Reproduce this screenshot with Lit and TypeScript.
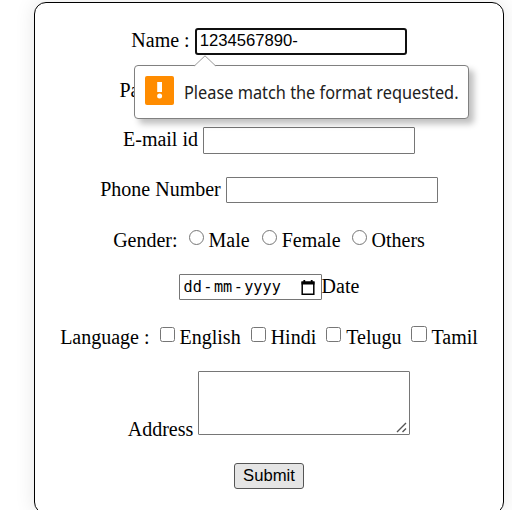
import { LitElement, html, css } from "lit";
import { customElement } from "lit/decorators.js";

@customElement("app-root")
export class AppRoot extends LitElement {
  static styles = css`
    :host { display: block; height: 510px; overflow: hidden; background: #fff; color: #000;
      font: 20px/24px "Liberation Serif", serif; }
    * { box-sizing: border-box; }
    .card { width: 470px; height: 512px; margin: 2px 0 0 34px; padding-top: 13px; border: 1px solid #000;
      border-radius: 12px; box-shadow: 0 0 20px rgba(0, 0, 0, 0.1); display: grid;
      grid-template-rows: 50px 49px 50px 50px 47px 50px 49px 88px 53px; }
    .row { display: flex; align-items: center; justify-content: center; white-space: pre; }
    .row > span { margin-bottom: 2px; }
    .choices > span { margin: 3px 0 0; }
    .languages > span { margin-top: 1px; }
    .password { width: 82px; }
    .field { width: 212px; height: 27px; margin: 0 0 0 5px; padding: 0 3px; border: 1px solid #767676;
      border-radius: 1px; background: #fff; outline: none; color: #000;
      font: 16.67px/20px "Liberation Sans", sans-serif; }
    .focus { border: 2px solid #101010; border-radius: 3px; padding: 0 3px 1px; }
    .phone { height: 26px; }
    .box { width: 15px; height: 15px; border: 1px solid #767676; border-radius: 2.5px; flex: none;
      margin: 0 5px 5px 0; }
    .box.wide { width: 16px; height: 16px; margin-right: 4px; }
    .radio { border-radius: 50%; margin: 0 5px 2px 1px; }
    .date { width: 143px; height: 26px; margin: 0; display: flex; align-items: center;
      font: 15.2px/20px "DejaVu Sans Mono", monospace; padding: 0 6px 0 4px; }
    .dash { width: 12px; text-align: center; }
    .cal { margin-left: auto; }
    .area { width: 212px; height: 64px; margin: 0 0 4px 5px; border: 1px solid #767676; border-radius: 1px;
      display: flex; align-items: flex-end; justify-content: flex-end; }
    .row > .address { align-self: flex-end; margin-bottom: 8px; }
    .submit { width: 70px; height: 26px; padding: 0; border: 1px solid #555; border-radius: 3px;
      background: #e5e5e5; color: #000; font: 16.67px/20px "Liberation Sans", sans-serif; }
    .tip { position: absolute; left: 134px; top: 65px; width: 335px; height: 54px; border: 1px solid #808080;
      border-radius: 4px; background: #fff; box-shadow: 5px 5px 6px rgba(0, 0, 0, 0.25);
      display: flex; align-items: center; padding-left: 10px; white-space: nowrap;
      font: 17.4px/24px "Noto Sans", sans-serif; color: #202020; }
    .arrow { position: absolute; left: 59px; top: -11px; }
    .warn { margin: 0 10px 4px 0; flex: none; }
    .message { transform: scaleX(0.938); transform-origin: left; margin-bottom: 1px; }
    svg { display: block; }
  `;

  private option(kind: string, label: string, gap: number) {
    return html`<i class="box ${kind}"></i><span>${label}</span><i style="width:${gap}px"></i>`;
  }

  render() {
    return html`
      <form class="card">
        <div class="row"><span>Name :</span><input class="field focus" value="1234567890-" /></div>
        <div class="row"><span class="password">Pa</span><input class="field" /></div>
        <div class="row"><span>E-mail id</span><input class="field" /></div>
        <div class="row"><span>Phone Number</span><input class="field phone" /></div>
        <div class="row choices"><span>Gender:  </span>${this.option("radio", "Male", 11)}${this.option("radio", "Female", 10)}${this.option("radio", "Others", 0)}</div>
        <div class="row"><div class="field date"><span>dd</span><span class="dash">-</span><span>mm</span><span class="dash">-</span><span>yyyy</span><svg class="cal" width="14" height="15" viewBox="0 0 14 15">
              <path d="M1.2 2.2h11.6v12H1.2z" fill="none" stroke="#000" stroke-width="1.5" />
              <path d="M.5 1.5h13v3H.5zM2.4 0h1.8v3H2.4zM9.8 0h1.8v3H9.8z" />
            </svg></div><span>Date</span></div>
        <div class="row choices languages"><span>Language :  </span>${this.option("", "English", 10)}${this.option("", "Hindi", 10)}${this.option("", "Telugu", 10)}${this.option("wide", "Tamil", 0)}</div>
        <div class="row">
          <span class="address">Address</span><div class="area"><svg width="13" height="12" viewBox="0 0 13 12"><path d="M1 10L10 1M6.5 10L10 6.5" stroke="#555" stroke-width="1.4" /></svg></div>
        </div>
        <div class="row"><button class="submit" type="button">Submit</button></div>
      </form>
      <div class="tip" role="alert">
        <svg class="arrow" width="22" height="12" viewBox="0 0 22 12">
          <path d="M.5 12V11L11 .8 21.5 11v1z" fill="#fff" /><path d="M.5 10.8L11 .8 21.5 10.8" fill="none" stroke="#999" />
        </svg>
        <svg class="warn" width="29" height="29" viewBox="0 0 29 29">
          <rect width="29" height="29" rx="2" fill="#ff8c00" />
          <path d="M12.2 6h4.8v10h-4.8z" fill="#fff" /><circle cx="14.6" cy="20" r="2.5" fill="#fff" />
        </svg>
        <span class="message">Please match the format requested.</span>
      </div>
    `;
  }
}
